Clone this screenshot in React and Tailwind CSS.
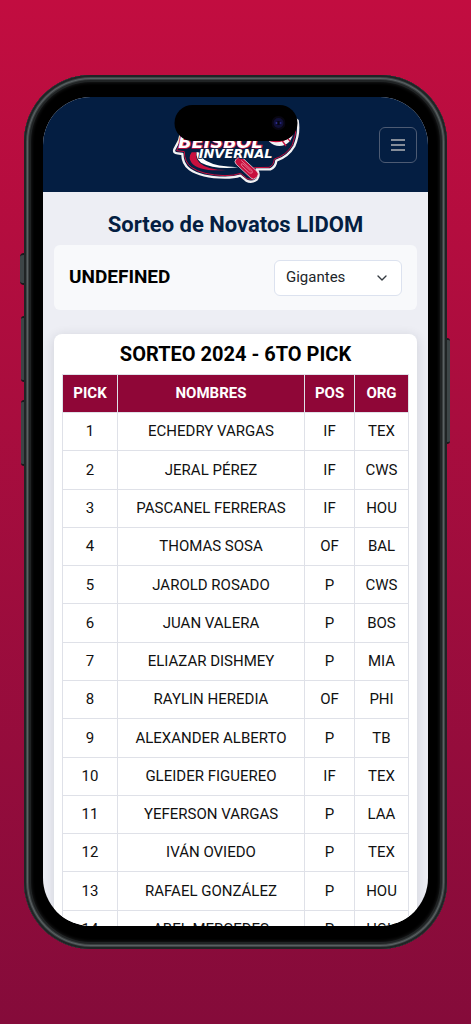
import React from 'react';
import { ChevronDown } from 'lucide-react';

const teams = ['Gigantes', 'Águilas', 'Escogido', 'Estrellas', 'Licey', 'Toros'];

const picks = [
  { name: 'ECHEDRY VARGAS', pos: 'IF', org: 'TEX' },
  { name: 'JERAL PÉREZ', pos: 'IF', org: 'CWS' },
  { name: 'PASCANEL FERRERAS', pos: 'IF', org: 'HOU' },
  { name: 'THOMAS SOSA', pos: 'OF', org: 'BAL' },
  { name: 'JAROLD ROSADO', pos: 'P', org: 'CWS' },
  { name: 'JUAN VALERA', pos: 'P', org: 'BOS' },
  { name: 'ELIAZAR DISHMEY', pos: 'P', org: 'MIA' },
  { name: 'RAYLIN HEREDIA', pos: 'OF', org: 'PHI' },
  { name: 'ALEXANDER ALBERTO', pos: 'P', org: 'TB' },
  { name: 'GLEIDER FIGUEREO', pos: 'IF', org: 'TEX' },
  { name: 'YEFERSON VARGAS', pos: 'P', org: 'LAA' },
  { name: 'IVÁN OVIEDO', pos: 'P', org: 'TEX' },
  { name: 'RAFAEL GONZÁLEZ', pos: 'P', org: 'HOU' },
  { name: 'ABEL MERCEDES', pos: 'P', org: 'HOU' },
];

const Logo = () => (
  <svg viewBox="60 45 390 240" className="w-[130px] h-20" role="img" aria-label="Beisbol Invernal">
    <path
      d="M92 120 L84 152 L70 178 Q66 189 80 190 L94 192 Q94 222 116 238 Q150 262 222 263 Q250 263 268 257 L286 272 Q303 280 318 268 Q328 254 317 238 L358 238 Q374 232 376 212 Q412 200 430 168 Q446 132 440 92 L400 60 L120 60 Z"
      fill="#041e42"
      stroke="#f3f1f3"
      strokeWidth="7"
      strokeLinejoin="round"
    />
    <path
      d="M98 120 L90 155 L77 182 L100 185 Q100 216 121 232 Q153 255 222 257 Q250 257 269 250 L288 266 Q302 273 313 263 Q320 252 308 233 L354 232 Q368 227 370 207 Q406 196 424 165 Q438 132 434 96"
      fill="none"
      stroke="#c8103e"
      strokeWidth="3"
    />
    <path d="M122 187 Q110 203 122 219 Q145 246 226 240 Q170 240 145 218 Q132 205 137 187 Z" fill="#c8103e" />
    <path d="M137 186 Q134 206 150 218 Q190 239 262 232 Q195 230 168 214 Q150 204 147 188 Z" fill="#fff" />
    <g transform="rotate(43 288 234)">
      <rect x="246" y="221" width="82" height="27" rx="11" fill="#c8103e" stroke="#f3f1f3" strokeWidth="2" />
      <path d="M260 229 H303 Q315 234 303 240 H272 Q262 235 274 233 H302" fill="none" stroke="#f19ab0" strokeWidth="2" />
    </g>
    <circle cx="385" cy="127" r="41" fill="#f3f1f3" />
    <path d="M350 150 Q386 165 424 135 M392 150 L405 168 M407 142 L418 154" fill="none" stroke="#c8103e" strokeWidth="4" />
    <g fontFamily="DejaVu Sans, sans-serif" fontWeight="700" fontStyle="italic" fill="#fff" paintOrder="stroke">
      <text x="82" y="175" fontSize="53" stroke="#c8103e" strokeWidth="5">BEISBOL</text>
      <text x="143" y="204" fontSize="39" stroke="#041e42" strokeWidth="5">INVERNAL</text>
    </g>
  </svg>
);

const Island = () => (
  <div className="absolute top-2 left-1/2 -translate-x-1/2 w-[123px] h-9 rounded-full bg-black flex items-center justify-end pr-3">
    <svg viewBox="0 0 14 14" className="size-[14px]" aria-hidden="true">
      <circle cx="7" cy="7" r="7" fill="#080612" />
      <circle cx="7" cy="7" r="5" fill="#100f38" />
      <circle cx="7" cy="7" r="2" fill="#05050f" />
      <circle cx="5" cy="7" r="1" fill="#303092" />
      <circle cx="9" cy="7" r="1" fill="#27277d" />
    </svg>
  </div>
);

const Header = () => (
  <header className="grid grid-cols-[1fr_auto_1fr] items-center h-[95px] px-[11px] bg-[#041e42]">
    <div className="col-start-2">
      <Logo />
    </div>
    <button
      type="button"
      aria-label="Menú"
      className="justify-self-end w-[38px] h-9 rounded-md border border-[#4d5b73] flex items-center justify-center"
    >
      <svg viewBox="0 0 14 12" className="w-[14px] h-3" stroke="#858d99" strokeWidth="2" aria-hidden="true">
        <path d="M0 1H14M0 6H14M0 11H14" />
      </svg>
    </button>
  </header>
);

const Filter = () => (
  <div className="flex items-center justify-between h-[65px] px-[15px] rounded-md bg-[#f8f9fb]">
    <label htmlFor="team" className="text-[19px] font-bold text-black">UNDEFINED</label>
    <div className="relative">
      <select
        id="team"
        className="appearance-none w-32 h-9 pl-[11px] pr-8 rounded-md border border-[#dce2ef] bg-white text-[15px] text-[#212529]"
      >
        {teams.map((team) => (
          <option key={team}>{team}</option>
        ))}
      </select>
      <ChevronDown className="absolute right-3 top-1/2 -translate-y-1/2 size-4 text-[#343a40] pointer-events-none" />
    </div>
  </div>
);

const PicksTable = () => (
  <section className="mt-6 px-2 pt-2 rounded-lg bg-white shadow-[0_2px_12px_rgba(30,35,60,0.14)]">
    <h2 className="text-xl leading-6 font-bold text-center text-black">SORTEO 2024 - 6TO PICK</h2>
    <table className="mt-2 w-full h-[575px] table-fixed border-collapse text-center text-[15px] text-[#111]">
      <thead>
        <tr className="h-[38px] bg-[#8f0637] text-white">
          <th className="w-[55px] border border-[#dfe1e8] font-bold">PICK</th>
          <th className="border border-[#dfe1e8] font-bold">NOMBRES</th>
          <th className="w-[50px] border border-[#dfe1e8] font-bold">POS</th>
          <th className="w-[54px] border border-[#dfe1e8] font-bold">ORG</th>
        </tr>
      </thead>
      <tbody>
        {picks.map((pick, index) => (
          <tr key={pick.name}>
            <td className="border border-[#dfe1e8]">{index + 1}</td>
            <td className="border border-[#dfe1e8]">{pick.name}</td>
            <td className="border border-[#dfe1e8]">{pick.pos}</td>
            <td className="border border-[#dfe1e8]">{pick.org}</td>
          </tr>
        ))}
      </tbody>
    </table>
  </section>
);

const SideButtons = () => (
  <>
    <span className="absolute -left-1 top-[178px] w-1 h-8 rounded-l-sm border-y-2 border-[#171b1d] bg-[#3d4547]" />
    <span className="absolute -left-[3px] top-[241px] w-[3px] h-[66px] rounded-l-sm border-y-2 border-[#171b1d] bg-[#3d4547]" />
    <span className="absolute -left-[3px] top-[325px] w-[3px] h-[66px] rounded-l-sm border-y-2 border-[#171b1d] bg-[#3d4547]" />
    <span className="absolute -right-[3px] top-[263px] w-[3px] h-[106px] rounded-r-sm border-y-2 border-[#171b1d] bg-[#3d4547]" />
  </>
);

const App = () => {
  return (
    <main className="h-screen px-6 py-[75px] bg-gradient-to-b from-[#c20d40] to-[#850b3a] font-['Roboto',sans-serif]">
      <div className="relative h-full px-[19px] pt-[22px] pb-[23px] rounded-[67px] bg-black shadow-[inset_0_0_0_2px_#202425,inset_0_0_0_3px_#3f4547,inset_0_0_0_4px_#5a6062,inset_0_0_0_5px_#3a3f40,inset_0_0_0_7px_#202324,inset_0_0_3px_8px_#151617]">
        <SideButtons />
        <div className="relative h-full overflow-hidden rounded-[48px] bg-[#edeef4]">
          <Header />
          <div className="px-[11px] pt-[17px]">
            <h1 className="mb-1 text-[22px] leading-8 font-bold text-center text-[#041e42]">Sorteo de Novatos LIDOM</h1>
            <Filter />
            <PicksTable />
          </div>
          <Island />
        </div>
      </div>
    </main>
  );
};

export default App;
